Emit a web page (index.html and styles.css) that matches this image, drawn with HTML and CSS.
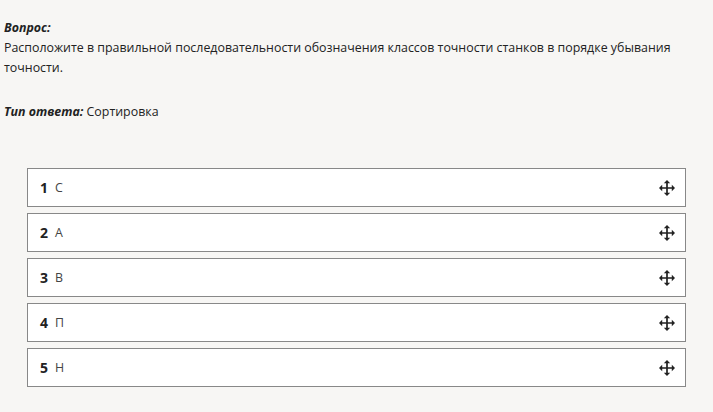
FILE: index.html
```html
<!DOCTYPE html>
<html>
<head lang="ru">
    <meta charset="UTF-8">
    <title>Вопрос</title>
    <link rel="stylesheet" href="styles.css">
</head>
<body>
<div class="question">
    <div class="label">Вопрос:</div>
    <div class="text">Расположите в правильной последовательности обозначения классов точности станков в порядке убывания точности.</div>
    <div class="type"><span class="label">Тип ответа:</span> Сортировка</div>
</div>
<ul class="sort">
    <li><b>1</b><span class="val">С</span><span class="move"><svg width="16" height="16" viewBox="0 0 15 15"><path d="M7.5 1v13M1 7.5h13" stroke="#222" stroke-width="1.6"/><path d="M7.5 0l3 3h-6zM7.5 15l3-3h-6zM0 7.5l3-3v6zM15 7.5l-3-3v6z" fill="#222"/></svg></span></li>
    <li><b>2</b><span class="val">А</span><span class="move"><svg width="16" height="16" viewBox="0 0 15 15"><path d="M7.5 1v13M1 7.5h13" stroke="#222" stroke-width="1.6"/><path d="M7.5 0l3 3h-6zM7.5 15l3-3h-6zM0 7.5l3-3v6zM15 7.5l-3-3v6z" fill="#222"/></svg></span></li>
    <li><b>3</b><span class="val">В</span><span class="move"><svg width="16" height="16" viewBox="0 0 15 15"><path d="M7.5 1v13M1 7.5h13" stroke="#222" stroke-width="1.6"/><path d="M7.5 0l3 3h-6zM7.5 15l3-3h-6zM0 7.5l3-3v6zM15 7.5l-3-3v6z" fill="#222"/></svg></span></li>
    <li><b>4</b><span class="val">П</span><span class="move"><svg width="16" height="16" viewBox="0 0 15 15"><path d="M7.5 1v13M1 7.5h13" stroke="#222" stroke-width="1.6"/><path d="M7.5 0l3 3h-6zM7.5 15l3-3h-6zM0 7.5l3-3v6zM15 7.5l-3-3v6z" fill="#222"/></svg></span></li>
    <li><b>5</b><span class="val">Н</span><span class="move"><svg width="16" height="16" viewBox="0 0 15 15"><path d="M7.5 1v13M1 7.5h13" stroke="#222" stroke-width="1.6"/><path d="M7.5 0l3 3h-6zM7.5 15l3-3h-6zM0 7.5l3-3v6zM15 7.5l-3-3v6z" fill="#222"/></svg></span></li>
</ul>
</body>
</html>
```
FILE: styles.css
```css
*{
    margin: 0;
    padding: 0;
}
body{
    background: #f7f6f4;
    color: #222;
    font-family: "Open Sans", "Noto Sans", sans-serif;
    font-size: 12.4px;
    line-height: 20px;
    padding: 18px 4px 0;
}
ul{
    list-style: none;
}
.label{
    font-weight: bold;
    font-style: italic;
}
.type{
    margin-top: 24px;
}
.sort{
    margin: 46px 23px 0;
    display: flex;
    flex-direction: column;
    gap: 6px;
}
.sort li{
    height: 37px;
    background: #fff;
    border: 1px solid #888;
    display: flex;
    align-items: center;
    padding: 0 10px 0 12px;
}
.sort b{
    font-size: 14px;
    width: 15px;
}
.val{
    flex: 1;
    color: #444;
}
.move{
    display: flex;
}
```
